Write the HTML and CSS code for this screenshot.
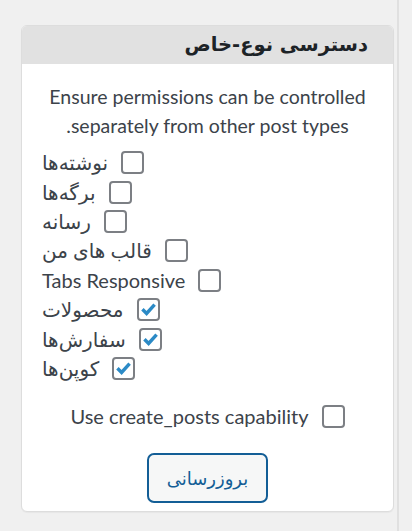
FILE: index.html
```html
<!DOCTYPE html>
<html lang="fa">
<head>
<meta charset="utf-8">
<link rel="stylesheet" href="styles.css">
</head>
<body>
<div class="wrap">
  <div class="card">
    <div class="card-head">دسترسی نوع-خاص</div>
    <div class="card-body">
      <p class="desc">Ensure permissions can be controlled separately from other post types.</p>
      <ul class="types">
        <li><label class="opt"><span class="box"></span><span>نوشته‌ها</span></label></li>
        <li><label class="opt"><span class="box"></span><span>برگه‌ها</span></label></li>
        <li><label class="opt"><span class="box"></span><span>رسانه</span></label></li>
        <li><label class="opt"><span class="box"></span><span>قالب های من</span></label></li>
        <li><label class="opt"><span class="box"></span><span>Tabs Responsive</span></label></li>
        <li><label class="opt"><span class="box"><svg viewBox="0 0 20 20" class="tick"><path d="M3.6 9.8 L8 14.2 L16.4 4.8"/></svg></span><span>محصولات</span></label></li>
        <li><label class="opt"><span class="box"><svg viewBox="0 0 20 20" class="tick"><path d="M3.6 9.8 L8 14.2 L16.4 4.8"/></svg></span><span>سفارش‌ها</span></label></li>
        <li><label class="opt"><span class="box"><svg viewBox="0 0 20 20" class="tick"><path d="M3.6 9.8 L8 14.2 L16.4 4.8"/></svg></span><span>کوپن‌ها</span></label></li>
      </ul>
      <div class="cap"><label class="opt"><span class="box"></span><span>Use create_posts capability</span></label></div>
      <div class="actions"><button class="btn" type="button">بروزرسانی</button></div>
    </div>
  </div>
</div>
</body>
</html>
```
FILE: styles.css
```css
html, body {
  margin: 0;
  background: #f0f0f0;
}
body {
  font-family: "Lato", "DejaVu Sans", sans-serif;
  color: #3c434a;
}
.wrap {
  width: 399px;
  height: 531px;
  box-sizing: border-box;
  border-right: 2px solid #e0e0e0;
  padding: 25px 3px 0 21px;
}
.card {
  width: 373px;
  height: 487px;
  box-sizing: border-box;
  background: #fff;
  border: 1px solid #dddddd;
  border-radius: 6px;
  overflow: hidden;
  direction: rtl;
  box-shadow: 0 1px 1px rgba(0,0,0,0.04);
}
.card-head {
  height: 38px;
  background: #e1e1e1;
  padding: 0 25px;
  font-family: "DejaVu Sans", sans-serif;
  font-weight: bold;
  font-size: 19.5px;
  line-height: 38px;
  color: #1d2327;
}
.card-body {
  display: flex;
  flex-direction: column;
}
.desc {
  margin: 18px 14px 0;
  text-align: center;
  font-size: 19.5px;
  line-height: 29px;
}
.types {
  list-style: none;
  margin: 8px 0 0;
  padding: 0 20px;
}
.types li {
  height: 29.4px;
  display: flex;
  align-items: center;
  justify-content: flex-end;
}
.opt {
  display: inline-flex;
  align-items: center;
  gap: 13px;
  font-size: 20px;
}
.box {
  width: 23px;
  height: 23px;
  box-sizing: border-box;
  border: 2px solid #7c7f84;
  border-radius: 4px;
  display: flex;
  align-items: center;
  justify-content: center;
  background: #fff;
}
.tick {
  width: 19px;
  height: 19px;
}
.tick path {
  fill: none;
  stroke: #2b8ac6;
  stroke-width: 3.6;
  stroke-linecap: butt;
  stroke-linejoin: miter;
}
.cap {
  margin-top: 18px;
  height: 30px;
  display: flex;
  justify-content: center;
  align-items: center;
}
.actions {
  margin-top: 22px;
  display: flex;
  justify-content: center;
}
.btn {
  width: 121px;
  height: 50px;
  box-sizing: border-box;
  border: 2px solid #135e96;
  border-radius: 7px;
  background: #f6f7f7;
  color: #135e96;
  font-family: "DejaVu Sans", sans-serif;
  font-size: 18px;
  padding: 0;
}
```
